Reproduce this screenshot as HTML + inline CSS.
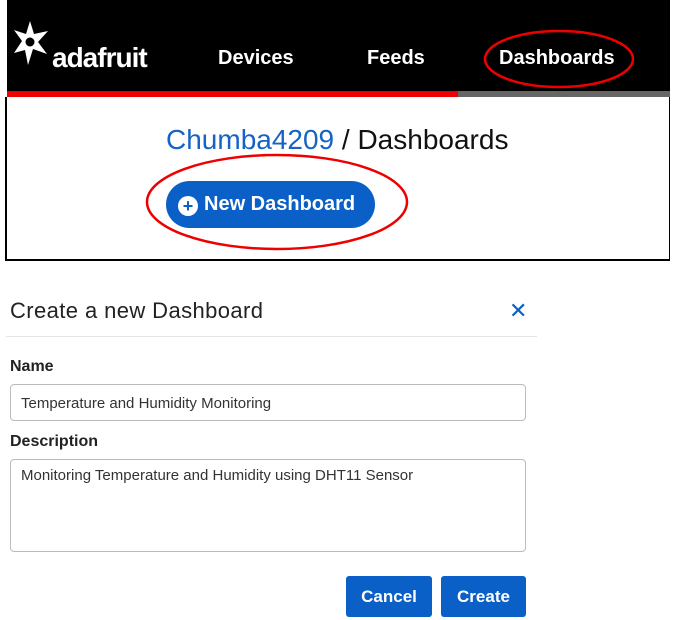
<!DOCTYPE html>
<html><head><style>
body{margin:0;width:689px;height:620px;background:#fff;font-family:"Liberation Sans",sans-serif;position:relative;overflow:hidden}
.a{position:absolute}
.hdr{left:7px;top:0;width:663px;height:91px;background:#000}
.nav{color:#fff;font-size:20px;font-weight:bold;top:47px}
.box{left:5px;top:97px;width:665px;height:164px;border:1px solid #000;border-top:none;border-bottom:2px solid #000;border-left:2px solid #000;box-sizing:border-box}
.lbl{font-size:16px;font-weight:bold;color:#222;left:10px}
.inp{left:10px;width:516px;border:1px solid #bbb;border-radius:4px;box-sizing:border-box;font-size:15px;color:#333;padding-left:10px}
.btn{background:#0a60c6;color:#fff;font-size:17px;font-weight:bold;text-align:center;line-height:41px;height:41px;top:576px;border-radius:3px}
</style></head><body>
<div class="a hdr"></div>
<svg class="a" style="left:12px;top:20px" width="40" height="48" viewBox="0 0 40 48"><polygon points="18,1 22,14 36,11 26,22 35,34 21,29 16,45 13,30 2,33 10,21 2,10 14,14" fill="#fff"/><circle cx="18" cy="22" r="4.5" fill="#000"/></svg>
<div class="a" style="left:52px;top:42px;color:#fff;font-size:28px;font-weight:bold;letter-spacing:-1px">adafruit</div>
<div class="a nav" style="left:218px">Devices</div>
<div class="a nav" style="left:367px">Feeds</div>
<div class="a nav" style="left:499px">Dashboards</div>
<div class="a" style="left:7px;top:91px;width:451px;height:6px;background:#e00"></div>
<div class="a" style="left:458px;top:91px;width:212px;height:6px;background:#666"></div>
<div class="a box"></div>
<div class="a" style="left:166px;top:124px;font-size:28px;color:#111"><span style="color:#1563c4">Chumba4209</span> / Dashboards</div>
<div class="a" style="left:166px;top:181px;width:209px;height:47px;border-radius:24px;background:#0a60c6;color:#fff;font-size:20px;font-weight:bold;line-height:47px"><span style="display:inline-block;width:20px;height:20px;border-radius:50%;background:#fff;color:#0a60c6;text-align:center;line-height:20px;font-size:18px;margin:0 6px 0 12px;vertical-align:-2px">+</span>New Dashboard</div>
<svg class="a" style="left:0;top:0" width="689" height="270"><ellipse cx="559" cy="59" rx="74" ry="28" fill="none" stroke="#e00" stroke-width="2.5"/><ellipse cx="277" cy="202" rx="130" ry="47" fill="none" stroke="#e00" stroke-width="2.5"/></svg>
<div class="a" style="left:10px;top:298px;font-size:22px;color:#222;letter-spacing:0.4px">Create a new Dashboard</div>
<div class="a" style="left:509px;top:298px;font-size:22px;color:#0a60c6">✕</div>
<div class="a" style="left:6px;top:336px;width:531px;height:1px;background:#e5e5e5"></div>
<div class="a lbl" style="top:358px">Name</div>
<div class="a inp" style="top:384px;height:37px;line-height:37px">Temperature and Humidity Monitoring</div>
<div class="a lbl" style="top:433px">Description</div>
<div class="a inp" style="top:459px;height:93px;padding-top:7px">Monitoring Temperature and Humidity using DHT11 Sensor</div>
<div class="a btn" style="left:346px;width:86px">Cancel</div>
<div class="a btn" style="left:441px;width:85px">Create</div>
</body></html>
